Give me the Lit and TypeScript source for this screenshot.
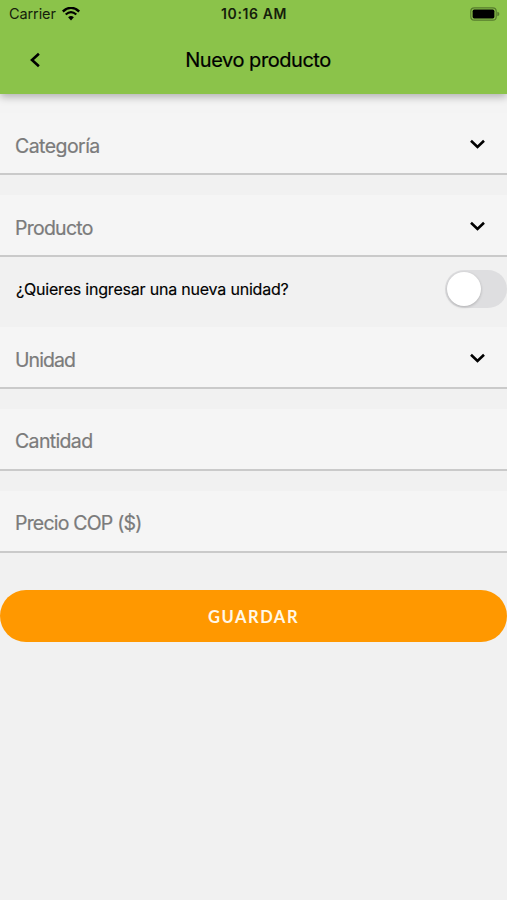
import { LitElement, html, css, svg } from "lit";
import { customElement, property } from "lit/decorators.js";

@customElement("form-field")
class FormField extends LitElement {
  @property() label = "";
  @property() spacing = "0px";
  @property({ type: Boolean }) select = false;

  static styles = css`
    :host {
      display: flex;
      box-sizing: border-box;
      height: 62px;
      padding: 4px 21px 0 15px;
      align-items: center;
      justify-content: space-between;
      background: #f5f5f5;
      border-bottom: 2px solid #cacaca;
      color: #7b7b7b;
      font-size: 19.5px;
      line-height: 24px;
    }
    :host([select]) {
      padding-top: 6px;
    }
    .label {
      -webkit-text-stroke: 0.2px #7b7b7b;
    }
    .chevron {
      display: block;
      margin-top: -5px;
    }
  `;

  render() {
    return html`
      <span class="label" style="letter-spacing:${this.spacing}">${this.label}</span>
      ${this.select
        ? html`<svg class="chevron" width="17" height="12" viewBox="0 0 17 12">
            ${svg`<path d="M2 2.8 L8.5 9 L15 2.8" fill="none" stroke="#000" stroke-width="2.6"/>`}
          </svg>`
        : ""}
    `;
  }
}

@customElement("app-root")
class AppRoot extends LitElement {
  static styles = css`
    :host {
      display: flex;
      flex-direction: column;
      height: 900px;
      overflow: hidden;
      background: #f1f1f1;
      font-family: Inter, "Liberation Sans", sans-serif;
      color: #000;
    }
    .header {
      height: 94px;
      flex: none;
      background: #8bc34a;
      box-shadow: 0 3px 8px rgba(0, 0, 0, 0.28);
      position: relative;
    }
    .status {
      display: grid;
      grid-template-columns: 1fr auto 1fr;
      align-items: center;
      height: 27px;
      padding: 0 7px 0 9px;
      font-size: 14px;
      color: #15200a;
    }
    .carrier {
      display: flex;
      align-items: center;
      gap: 6px;
      font-size: 14.5px;
      letter-spacing: -0.1px;
    }
    .time {
      font-weight: 600;
      letter-spacing: 0.6px;
      margin-right: 1px;
    }
    .battery {
      justify-self: end;
    }
    .bar {
      display: grid;
      grid-template-columns: 70px 1fr 70px;
      align-items: center;
      height: 66px;
    }
    .back {
      justify-self: center;
    }
    .title {
      margin: 0 -5px 0 4px;
      text-align: center;
      font-size: 20px;
      letter-spacing: -0.45px;
      -webkit-text-stroke: 0.2px #000;
    }
    .form {
      display: flex;
      flex-direction: column;
      gap: 20px;
    }
    .first {
      padding-top: 19px;
      background: #f4f4f4;
    }
    .ask {
      display: flex;
      align-items: center;
      justify-content: space-between;
      height: 70px;
      margin: -20px 0;
      padding: 0 0 0 16px;
      font-size: 16px;
    }
    .question {
      letter-spacing: -0.2px;
      margin-top: -6px;
      -webkit-text-stroke: 0.15px #000;
    }
    .switch {
      box-sizing: border-box;
      width: 62.5px;
      height: 38px;
      margin-top: -6px;
      padding: 2px;
      border-radius: 19px;
      background: #dedee0;
    }
    .knob {
      width: 34px;
      height: 34px;
      border-radius: 50%;
      background: #fff;
      box-shadow: 0 1px 3px rgba(0, 0, 0, 0.22);
    }
    .save {
      height: 52px;
      margin-top: 17px;
      padding: 1px 0 0;
      border: 0;
      border-radius: 26px;
      background: #ff9800;
      color: #fff8e8;
      font: 700 16.5px Lato, sans-serif;
      letter-spacing: 1.55px;
    }
  `;

  render() {
    return html`
      <div class="header">
        <div class="status">
          <div class="carrier">
            <span>Carrier</span>
            <svg width="18" height="14" viewBox="0 0 18 14">
              <path d="M0.8 4.5 Q9 -2.8 17.2 4.5" fill="none" stroke="#000" stroke-width="2.4" />
              <path d="M3.7 7.5 Q9 2.8 14.3 7.5" fill="none" stroke="#000" stroke-width="2.2" />
              <path d="M6.1 10.2 Q9 7.7 11.9 10.2 L9 13.4Z" />
            </svg>
          </div>
          <span class="time">10:16 AM</span>
          <svg class="battery" width="30" height="14" viewBox="0 0 30 14">
            <rect x="0.8" y="0.8" width="25.4" height="12.4" rx="3.5" fill="none" stroke="#577c2e" stroke-width="1.2" />
            <rect x="2.6" y="2.6" width="21.8" height="8.8" rx="1.6" />
            <path d="M27.3 4.7 Q29.4 5.3 29.4 7 T27.3 9.3Z" fill="#577c2e" />
          </svg>
        </div>
        <div class="bar">
          <svg class="back" width="12" height="16" viewBox="0 0 12 16">
            <path d="M9.9 1.7 L3 8 L9.9 14.3" fill="none" stroke="#000" stroke-width="2.6" />
          </svg>
          <div class="title">Nuevo producto</div>
        </div>
      </div>
      <div class="form">
        <div class="first">
          <form-field label="Categoría" spacing="-0.55px" select></form-field>
        </div>
        <form-field label="Producto" spacing="-0.75px" select></form-field>
        <div class="ask">
          <span class="question">¿Quieres ingresar una nueva unidad?</span>
          <div class="switch"><div class="knob"></div></div>
        </div>
        <form-field label="Unidad" spacing="-0.95px" select></form-field>
        <form-field label="Cantidad" spacing="-0.65px"></form-field>
        <form-field label="Precio COP ($)" spacing="-0.8px"></form-field>
        <button class="save">GUARDAR</button>
      </div>
    `;
  }
}
